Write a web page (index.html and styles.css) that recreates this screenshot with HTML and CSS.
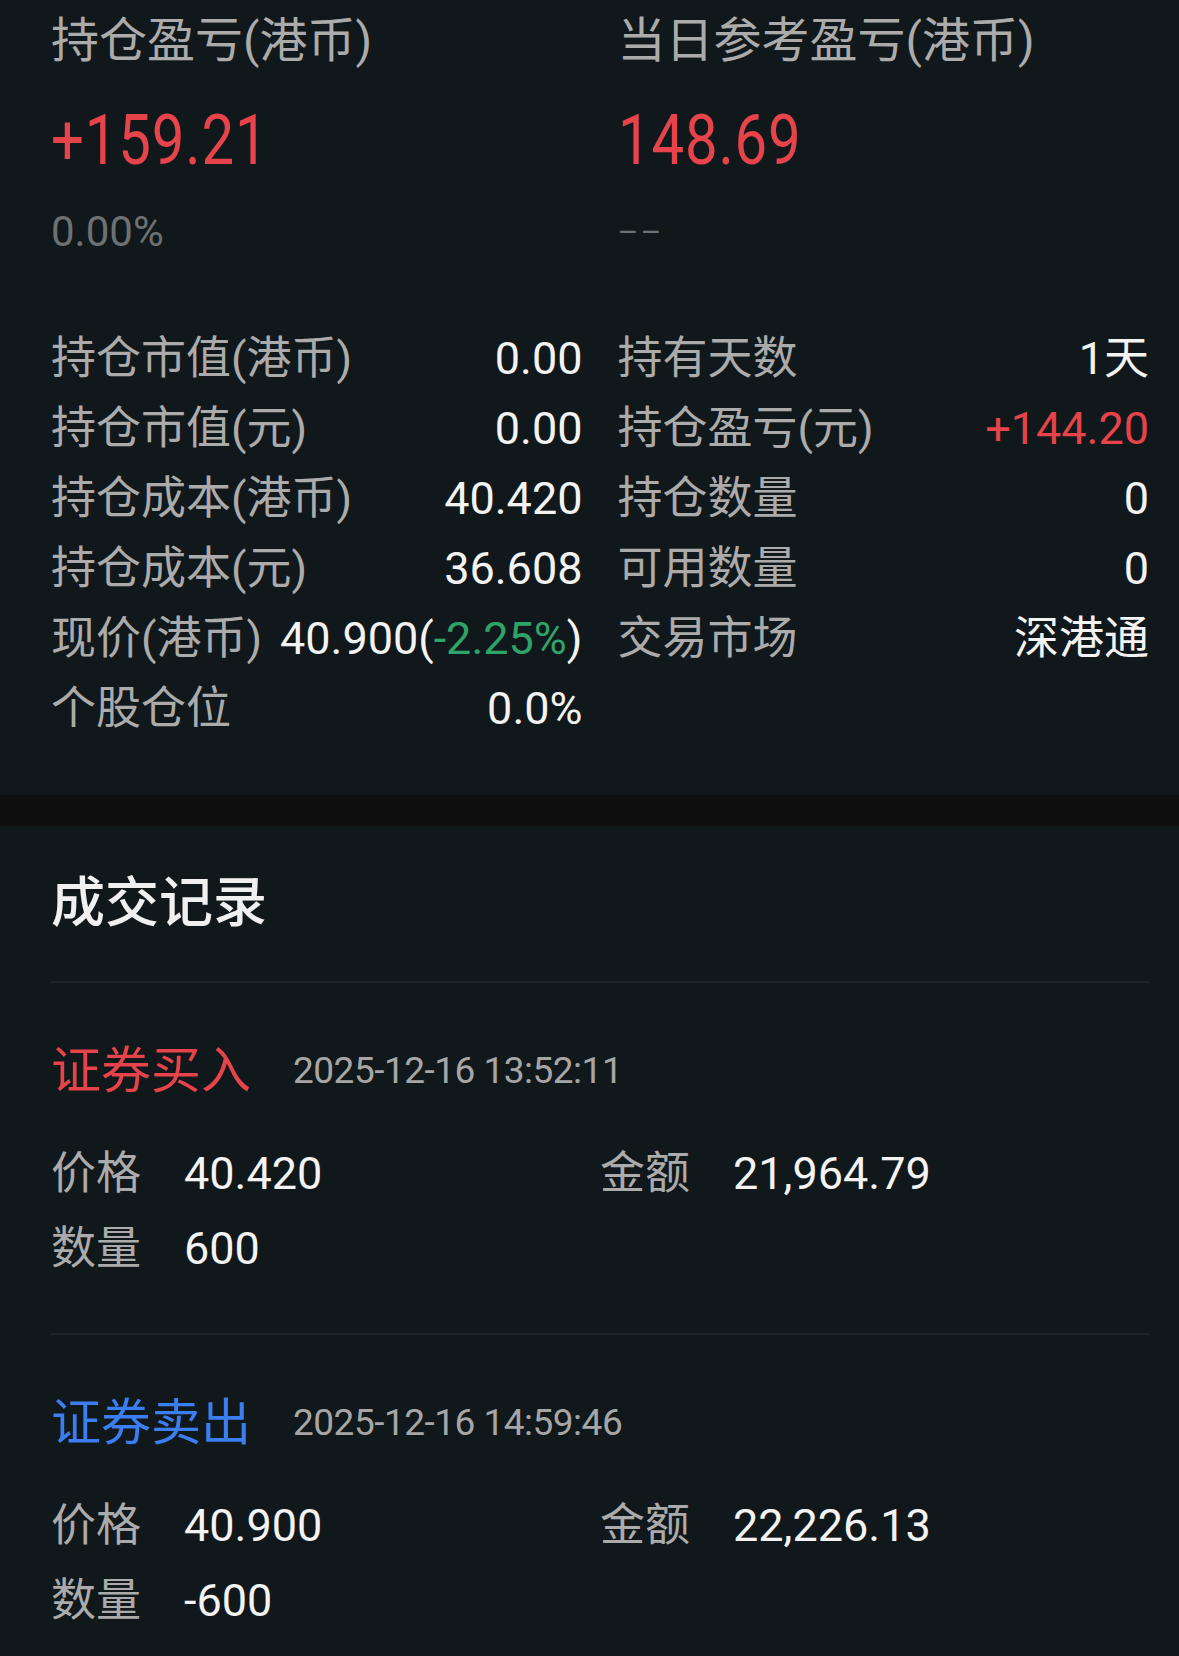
FILE: index.html
```html
<!DOCTYPE html>
<html lang="zh-CN">
<head>
    <meta charset="UTF-8">
    <meta name="viewport" content="width=device-width, initial-scale=1.0">
    <title>持仓详情</title>
    <link rel="stylesheet" href="styles.css">
</head>
<body>
    <section class="position">
        <div class="summary">
            <div class="summary-item">
                <div class="summary-label">持仓盈亏(港币)</div>
                <div class="summary-value up">+159.21</div>
                <div class="summary-sub">0.00%</div>
            </div>
            <div class="summary-item">
                <div class="summary-label">当日参考盈亏(港币)</div>
                <div class="summary-value up">148.69</div>
                <div class="summary-sub empty">––</div>
            </div>
        </div>

        <div class="details">
            <ul class="detail-list">
                <li class="detail-row"><span class="detail-label">持仓市值(港币)</span><span class="detail-value">0.00</span></li>
                <li class="detail-row"><span class="detail-label">持仓市值(元)</span><span class="detail-value">0.00</span></li>
                <li class="detail-row"><span class="detail-label">持仓成本(港币)</span><span class="detail-value">40.420</span></li>
                <li class="detail-row"><span class="detail-label">持仓成本(元)</span><span class="detail-value">36.608</span></li>
                <li class="detail-row"><span class="detail-label">现价(港币)</span><span class="detail-value">40.900(<span class="down">-2.25%</span>)</span></li>
                <li class="detail-row"><span class="detail-label">个股仓位</span><span class="detail-value">0.0%</span></li>
            </ul>
            <ul class="detail-list">
                <li class="detail-row"><span class="detail-label">持有天数</span><span class="detail-value">1天</span></li>
                <li class="detail-row"><span class="detail-label">持仓盈亏(元)</span><span class="detail-value up">+144.20</span></li>
                <li class="detail-row"><span class="detail-label">持仓数量</span><span class="detail-value">0</span></li>
                <li class="detail-row"><span class="detail-label">可用数量</span><span class="detail-value">0</span></li>
                <li class="detail-row"><span class="detail-label">交易市场</span><span class="detail-value">深港通</span></li>
            </ul>
        </div>
    </section>

    <div class="band"></div>

    <section class="trades">
        <h2 class="trades-title">成交记录</h2>

        <div class="trade">
            <div class="trade-head">
                <span class="trade-type buy">证券买入</span>
                <span class="trade-time">2025-12-16 13:52:11</span>
            </div>
            <div class="trade-grid">
                <div class="field"><span class="field-label">价格</span><span class="field-value">40.420</span></div>
                <div class="field"><span class="field-label">金额</span><span class="field-value">21,964.79</span></div>
                <div class="field"><span class="field-label">数量</span><span class="field-value">600</span></div>
            </div>
        </div>

        <div class="trade">
            <div class="trade-head">
                <span class="trade-type sell">证券卖出</span>
                <span class="trade-time">2025-12-16 14:59:46</span>
            </div>
            <div class="trade-grid">
                <div class="field"><span class="field-label">价格</span><span class="field-value">40.900</span></div>
                <div class="field"><span class="field-label">金额</span><span class="field-value">22,226.13</span></div>
                <div class="field"><span class="field-label">数量</span><span class="field-value">-600</span></div>
            </div>
        </div>
    </section>
</body>
</html>
```

FILE: styles.css
```css
/* General */
body {
    margin: 0;
    background-color: #11181b;
    color: #f3f3f3;
    font-family: Roboto, "Noto Sans CJK SC", sans-serif;
}

ul {
    list-style: none;
    margin: 0;
    padding: 0;
}

.up {
    color: #e6434a;
}

.down {
    color: #2ea36a;
}

/* Position summary */
.position {
    padding: 4px 30px 51px 51px;
}

.summary {
    display: grid;
    grid-template-columns: 1fr 1fr;
    column-gap: 35px;
}

.summary-label {
    font-size: 48px;
    line-height: 74px;
    color: #ababab;
}

/* the app uses a condensed numeral face */
.summary-value {
    margin-top: 32px;
    font-size: 70px;
    line-height: 60px;
    letter-spacing: 1px;
    transform: scaleX(0.83);
    transform-origin: left center;
}

.summary-sub {
    margin-top: 42px;
    font-size: 42px;
    line-height: 40px;
    color: #6e7173;
}

.summary-sub.empty {
    font-size: 32px;
    letter-spacing: 2px;
}

/* Detail rows */
.details {
    display: grid;
    grid-template-columns: 1fr 1fr;
    column-gap: 35px;
    margin-top: 72px;
}

.detail-row {
    display: flex;
    justify-content: space-between;
    align-items: baseline;
    font-size: 45px;
    line-height: 70px;
}

.detail-label {
    color: #ababab;
}

.detail-value {
    color: #f3f3f3;
}

.detail-value.up {
    color: #e6434a;
}

.band {
    height: 31px;
    background-color: #0f0f0f;
}

/* Trade records */
.trades {
    padding: 38px 30px 0 51px;
}

.trades-title {
    margin: 0 0 37px;
    font-size: 54px;
    font-weight: 500;
    line-height: 80px;
    color: #f0f0f0;
}

.trade {
    border-top: 2px solid #1e2528;
    padding: 53px 0 47px;
}

.trade:last-child {
    padding-bottom: 18px;
}

.trade-head {
    display: flex;
    align-items: center;
    gap: 42px;
    margin-bottom: 30px;
}

.trade-type {
    font-size: 50px;
    line-height: 70px;
}

.trade-type.buy {
    color: #e6434a;
}

.trade-type.sell {
    color: #3b7ef2;
}

.trade-time {
    font-size: 37px;
    line-height: 70px;
    letter-spacing: -0.5px;
    color: #a6a6a6;
}

.trade-grid {
    display: grid;
    grid-template-columns: 1fr 1fr;
}

.field {
    display: flex;
    align-items: baseline;
    font-size: 45px;
    line-height: 75px;
}

.field-label {
    width: 133px;
    flex-shrink: 0;
    color: #ababab;
}

.field-value {
    color: #f3f3f3;
}
```
